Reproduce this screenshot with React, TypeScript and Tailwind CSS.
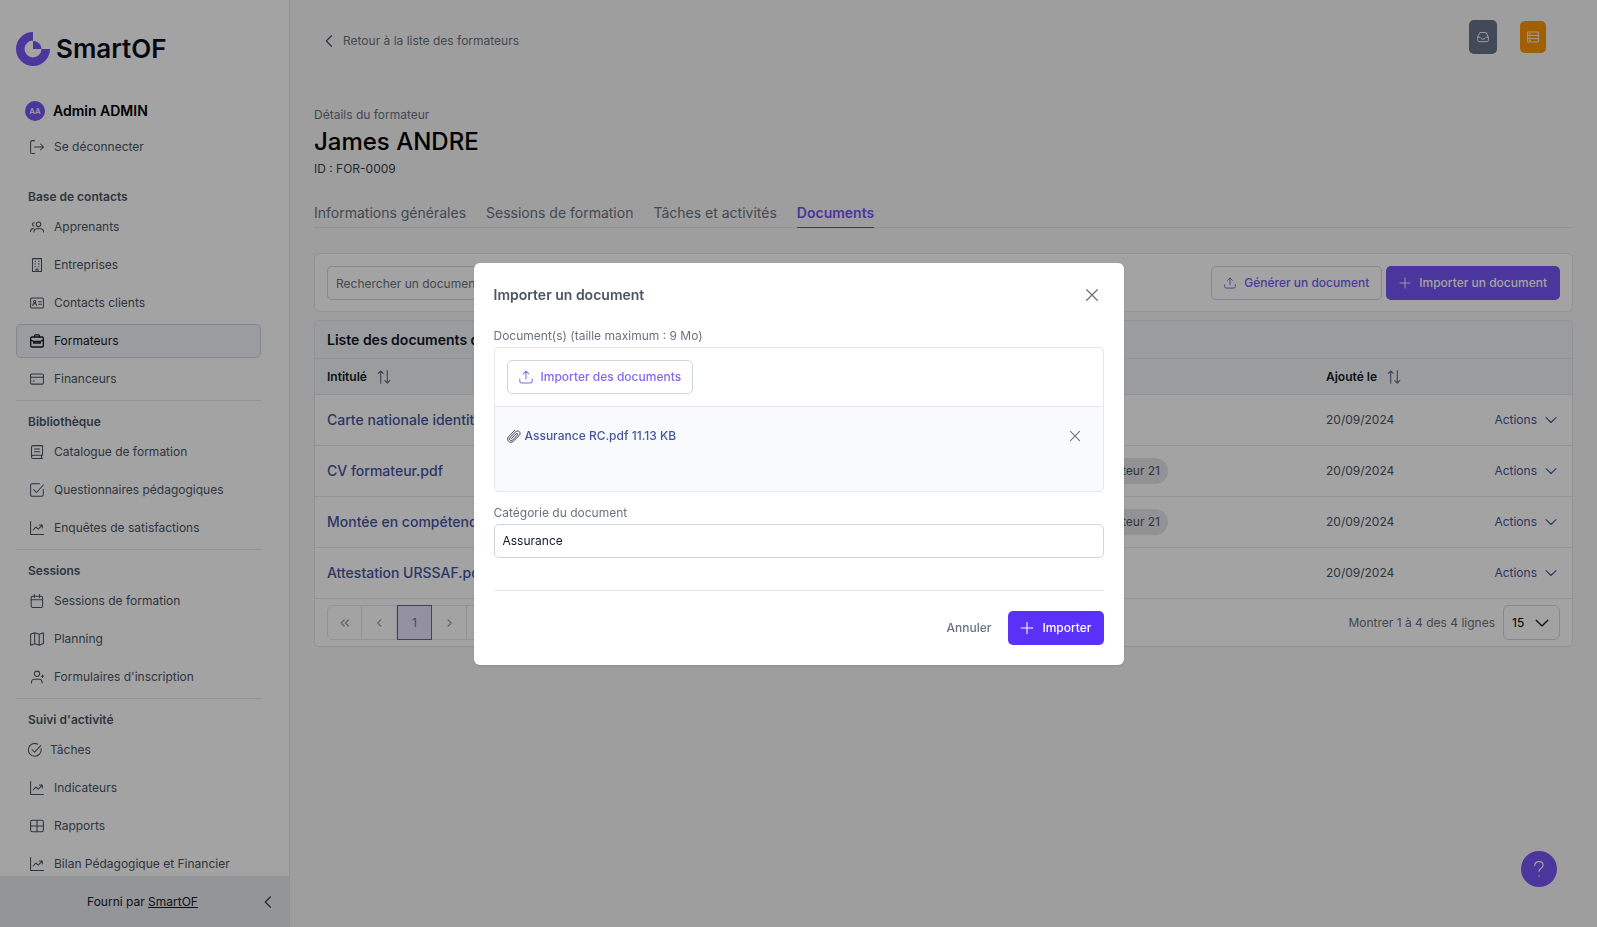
import type { ReactNode } from "react";

type IconProps = { className?: string };

function Svg({ className = "size-3.5", children }: { className?: string; children: ReactNode }) {
  return (
    <svg
      viewBox="0 0 14 14"
      className={`shrink-0 ${className}`}
      fill="none"
      stroke="currentColor"
      strokeWidth="1.050"
      strokeLinecap="round"
      strokeLinejoin="round"
      aria-hidden="true"
    >
      {children}
    </svg>
  );
}

const SignOut = (p: IconProps) => (
  <Svg {...p}>
    <path d="M4.500.6H2A1.400 1.400 0 0 0 .6 2v10A1.400 1.400 0 0 0 2 13.400h2.500M4.500 7h9M10.500 4l3 3-3 3" />
  </Svg>
);
const Users = (p: IconProps) => (
  <Svg {...p}>
    <circle cx="8.500" cy="4.300" r="2.300" />
    <path d="M4 12v-.6C4 9.700 5.200 8.800 6.700 8.800h3.600c1.500 0 3.200.9 3.200 2.600v.6M4.300 2.700C2.200 2.500 1.700 5.500 3.900 6.100M.5 11.500C.5 9.700 1.500 8.600 3.400 8.500" />
  </Svg>
);
const Building = (p: IconProps) => (
  <Svg {...p}>
    <path d="M2.500.6h9v12.800h-9zM6 13.400v-2.400h2v2.400" />
    <path d="M5.200 3v.6M8.800 3v.6M5.200 5.600v.6M8.800 5.600v.6M5.200 8.200v.6M8.800 8.200v.6" />
  </Svg>
);
const IdCard = (p: IconProps) => (
  <Svg {...p}>
    <rect x=".6" y="2" width="12.800" height="10" rx="1" />
    <circle cx="4.700" cy="5.500" r="1.100" />
    <path d="M2.700 9.500c.2-2.500 3.800-2.500 4 0M8.800 5.700h2.500M8.800 8.200h2.500" />
  </Svg>
);
const Briefcase = (p: IconProps) => (
  <Svg {...p}>
    <g strokeWidth="1.300">
      <rect x=".7" y="3" width="12.600" height="10" rx="1.200" />
      <path d="M4.500 3V1.800C4.500 1.200 4.900.9 5.400.9h3.200c.5 0 .9.300.9.900V3M.7 6.200l3 1.300h6.600l3-1.300M3.700 7.500v1.700h6.600V7.500" />
    </g>
  </Svg>
);
const CreditCard = (p: IconProps) => (
  <Svg {...p}>
    <rect x=".6" y="1.900" width="12.800" height="10.200" rx="1.200" />
    <path d="M.6 5.200h12.800M3.200 9h1.200" />
  </Svg>
);
const Book = (p: IconProps) => (
  <Svg {...p}>
    <path d="M12.500 10.300V.6H3A1.500 1.500 0 0 0 1.500 2v10A1.500 1.500 0 0 0 3 13.400h9.500M12.500 10.300H3A1.500 1.500 0 0 0 1.500 11.900M11.500 10.300v3.100M4.500 4h5M4.500 6.800h5" />
  </Svg>
);
const CheckSquare = (p: IconProps) => (
  <Svg {...p}>
    <path d="M9.500.7H2A1.400 1.400 0 0 0 .6 2.200v9.600A1.400 1.400 0 0 0 2 13.300h9.800a1.500 1.500 0 0 0 1.500-1.500V6.500M3.700 6.700l2.800 2.800 6.800-7.500" />
  </Svg>
);
const ChartLine = (p: IconProps) => (
  <Svg {...p}>
    <path d="M.6.5v12.900h12.900M3.300 9l2.500-3 2.400 2.200L12.200 4.200M9.300 4h3v3" />
  </Svg>
);
const Calendar = (p: IconProps) => (
  <Svg {...p}>
    <rect x="1.200" y="2.200" width="11.400" height="11.200" rx="1.500" />
    <path d="M1.200 5.700h11.400M4.300.6v3M9.600.6v3" />
  </Svg>
);
const MapIcon = (p: IconProps) => (
  <Svg {...p}>
    <path d="M.6 2.200L4.700.7l4.500 1.500L13.400.8v10.800l-4.200 1.700-4.500-1.600-4.100 1.500zM4.700.7v11M9.200 2.200v11" />
  </Svg>
);
const UserPlus = (p: IconProps) => (
  <Svg {...p}>
    <circle cx="7" cy="3.800" r="2.700" />
    <path d="M1.500 13v-.8c0-1.900 1.500-3 3.200-3h4.400c1.700 0 3 1.100 3 3v.8M11.300 6.300h2.500M12.500 5v2.500" />
  </Svg>
);
const CheckCircle = (p: IconProps) => (
  <Svg {...p}>
    <path d="M13 5.500A6.400 6.400 0 1 1 9.700 1.200M3.900 6.500l2.600 2.600 6.300-6.500" />
  </Svg>
);
const TableIcon = (p: IconProps) => (
  <Svg {...p}>
    <rect x=".6" y="1.200" width="12.800" height="11.600" rx="1.800" />
    <path d="M.6 7h12.800M7 1.200v11.600" />
  </Svg>
);
const Upload = (p: IconProps) => (
  <Svg {...p}>
    <path d="M7 9V1.200M4.100 4L7 1.100 9.900 4M.8 9v2.300c0 1 .6 1.600 1.600 1.600h9.200c1 0 1.600-.6 1.600-1.600V9" />
  </Svg>
);
const Plus = (p: IconProps) => (
  <Svg {...p}>
    <path d="M7 1.200v11.600M1.200 7h11.600" />
  </Svg>
);
const Close = (p: IconProps) => (
  <Svg {...p}>
    <path d="M1.700 1.700l10.600 10.600M12.300 1.700L1.700 12.300" strokeWidth="1.300" />
  </Svg>
);
const ChevronLeft = (p: IconProps) => (
  <Svg {...p}>
    <path d="M9.500 1.800L4.300 7l5.200 5.200" strokeWidth="1.250" />
  </Svg>
);
const ChevronDown = (p: IconProps) => (
  <Svg {...p}>
    <path d="M1.200 4.300L7 9.900l5.800-5.600" strokeWidth="1.350" />
  </Svg>
);
const SortAlt = (p: IconProps) => (
  <Svg {...p}>
    <path d="M3.700 13.300V.8M1.200 3.300L3.700.8l2.500 2.500M10.300.7v12.500M7.800 10.700l2.500 2.500 2.500-2.500" strokeWidth="1.200" />
  </Svg>
);
const Inbox = (p: IconProps) => (
  <Svg {...p}>
    <path d="M.7 7.300L3.300 1.800h7.400l2.600 5.500v3.600c0 .9-.6 1.500-1.500 1.500H2.200c-.9 0-1.500-.6-1.500-1.500zM.7 7.300h2.500c.8 0 1.400 2.200 3.800 2.200s3-2.200 3.800-2.200h2.500" />
  </Svg>
);
const Server = (p: IconProps) => (
  <Svg {...p}>
    <path d="M.7 1.200h12.600v11.600H.7zM.7 5.100h12.600M.7 8.900h12.600M2.600 3.200h1.200M2.600 7h1.200M2.600 10.900h1.200" />
  </Svg>
);
const Paperclip = (p: IconProps) => (
  <Svg {...p}>
    <path
      strokeWidth="1"
      d="M4.400 9.500l4.700-4.700c1-1 2.300.3 1.300 1.300L5.800 10.900c-1.900 1.900-4.500-.6-2.600-2.600L8.500 3c2.900-2.700 6.300.8 3.600 3.600L6.600 12c-3.600 3.400-8.100-1-4.800-4.600L7.800 1.300"
    />
  </Svg>
);

type Item = { label: string; Icon: (p: IconProps) => ReactNode; active?: boolean; tight?: boolean };

const sections: { title: string; items: Item[] }[] = [
  {
    title: "Base de contacts",
    items: [
      { label: "Apprenants", Icon: Users },
      { label: "Entreprises", Icon: Building },
      { label: "Contacts clients", Icon: IdCard },
      { label: "Formateurs", Icon: Briefcase, active: true },
      { label: "Financeurs", Icon: CreditCard },
    ],
  },
  {
    title: "Bibliothèque",
    items: [
      { label: "Catalogue de formation", Icon: Book },
      { label: "Questionnaires pédagogiques", Icon: CheckSquare },
      { label: "Enquêtes de satisfactions", Icon: ChartLine },
    ],
  },
  {
    title: "Sessions",
    items: [
      { label: "Sessions de formation", Icon: Calendar },
      { label: "Planning", Icon: MapIcon },
      { label: "Formulaires d'inscription", Icon: UserPlus },
    ],
  },
  {
    title: "Suivi d'activité",
    items: [
      { label: "Tâches", Icon: CheckCircle, tight: true },
      { label: "Indicateurs", Icon: ChartLine },
      { label: "Rapports", Icon: TableIcon },
      { label: "Bilan Pédagogique et Financier", Icon: ChartLine },
    ],
  },
];

function Sidebar() {
  return (
    <aside className="sticky top-0 flex h-screen w-[290px] shrink-0 flex-col border-r border-gray-200 bg-white">
      <div className="flex min-h-0 flex-1 flex-col overflow-hidden pr-7 pl-4">
        <a href="#" className="mt-8 flex h-[34px] shrink-0 items-center gap-1.5 text-[#0a0f1f]">
          <svg viewBox="0 0 34 34" className="size-[34px]" fill="#7555f5" aria-hidden="true">
            <path d="M17 0A17 17 0 1 0 34 17H25.500A8.500 8.500 0 1 1 17 8.500z" />
            <path d="M17 9v8h8.500A8.500 8.500 0 0 0 17 9z" />
          </svg>
          <span className="text-[26px] leading-8 font-semibold">SmartOF</span>
        </a>
        <div className="mt-[34px] ml-[9px] flex h-[22px] shrink-0 items-center gap-2">
          <span className="flex size-5 items-center justify-center rounded-full bg-[#7555f5] text-[8px] font-medium text-white">
            AA
          </span>
          <span className="text-[14px] font-semibold text-black">Admin ADMIN</span>
        </div>
        <button type="button" className="mt-4 flex h-[18px] shrink-0 items-center gap-2.5 px-3.5 text-gray-600">
          <SignOut />
          Se déconnecter
        </button>
        <nav className="mt-5 shrink-0">
          {sections.map((s) => (
            <section key={s.title} className="border-b border-gray-200 pb-0.5">
              <h2 className="px-3 pt-3 pb-0.5 font-semibold text-gray-600">{s.title}</h2>
              <ul className="flex flex-col gap-1 py-0.5">
                {s.items.map(({ label, Icon, active, tight }) => (
                  <li key={label}>
                    <a
                      href="#"
                      className={`flex h-[34px] items-center rounded-[5px] border ${
                        active ? "border-slate-300 bg-slate-100 text-gray-900" : "border-transparent text-gray-600"
                      } ${tight ? "gap-2 px-[11px]" : "gap-2.5 px-[13px]"}`}
                    >
                      <Icon />
                      {label}
                    </a>
                  </li>
                ))}
              </ul>
            </section>
          ))}
        </nav>
      </div>
      <footer className="flex h-[51px] shrink-0 items-center bg-[#e7e9ef] pr-3.5 pl-6 text-gray-900">
        <p className="flex-1 text-center">
          Fourni par{" "}
          <a href="#" className="underline">
            SmartOF
          </a>
        </p>
        <button type="button" aria-label="Réduire le menu" className="text-gray-700">
          <ChevronLeft />
        </button>
      </footer>
    </aside>
  );
}

const tabs = ["Informations générales", "Sessions de formation", "Tâches et activités", "Documents"];

const rows = [
  { name: "Carte nationale identité.pdf", tag: false },
  { name: "CV formateur.pdf", tag: true },
  { name: "Montée en compétences.pdf", tag: true },
  { name: "Attestation URSSAF.pdf", tag: false },
];

function Documents() {
  return (
    <div className="mt-2 overflow-hidden rounded-[5px] border border-gray-200 bg-white">
      <h2 className="flex h-[37px] items-center bg-[#f1f4f8] px-3 text-[14px] font-semibold text-gray-900">
        Liste des documents du formateur
      </h2>
      <table className="w-full table-fixed text-left">
        <colgroup>
          <col className="w-[45%]" />
          <col />
          <col className="w-[160px]" />
          <col className="w-[98px]" />
        </colgroup>
        <thead>
          <tr className="h-9 border-y border-gray-200 bg-[#f1f4f8] text-[12px] text-gray-900">
            <th className="px-3 font-semibold">
              <span className="flex items-center gap-2.5">
                Intitulé <SortAlt className="size-3.5 text-gray-500" />
              </span>
            </th>
            <th />
            <th className="px-3 font-semibold">
              <span className="flex items-center gap-2.5">
                Ajouté le <SortAlt className="size-3.5 text-gray-500" />
              </span>
            </th>
            <th />
          </tr>
        </thead>
        <tbody>
          {rows.map((r) => (
            <tr key={r.name} className="h-[51px] border-b border-gray-200">
              <td className="px-3 text-[14px] font-medium">
                <a href="#" className="text-[#4655a0]">
                  {r.name}
                </a>
              </td>
              <td className="pr-[146px] text-right">
                {r.tag && (
                  <span className="inline-flex h-[26px] items-center rounded-full bg-[#e4e4ea] px-2 text-gray-600">
                    Formateur 21
                  </span>
                )}
              </td>
              <td className="px-3 text-gray-600">20/09/2024</td>
              <td className="pr-[15px]">
                <button type="button" className="ml-auto flex items-center gap-2 text-[#4655a0]">
                  Actions
                  <ChevronDown className="size-3" />
                </button>
              </td>
            </tr>
          ))}
        </tbody>
      </table>
      <div className="flex h-[47px] items-center justify-between px-3">
        <div className="flex text-gray-400">
          <button type="button" aria-label="Première page" className="grid h-[35px] w-[35px] place-items-center rounded-l-md border border-gray-200">
            <Svg className="size-3">
              <path d="M6 3.500L2.500 7 6 10.500M11 3.500L7.500 7l3.500 3.500" strokeWidth="1.500" />
            </Svg>
          </button>
          <button type="button" aria-label="Page précédente" className="grid h-[35px] w-[35px] place-items-center border border-l-0 border-gray-200">
            <Svg className="size-3">
              <path d="M9 3.500L5.500 7 9 10.500" strokeWidth="1.500" />
            </Svg>
          </button>
          <button type="button" className="h-[35px] w-[35px] border border-[#6f55f0] bg-[#e6e2fb] text-[#7a62f2]">
            1
          </button>
          <button type="button" aria-label="Page suivante" className="grid h-[35px] w-[35px] place-items-center border border-l-0 border-gray-200">
            <Svg className="size-3">
              <path d="M6 3.500L9.500 7 6 10.500" strokeWidth="1.500" />
            </Svg>
          </button>
          <button type="button" aria-label="Dernière page" className="grid h-[35px] w-[35px] place-items-center rounded-r-md border border-l-0 border-gray-200">
            <Svg className="size-3">
              <path d="M3 3.500L6.500 7 3 10.500M8 3.500L11.500 7 8 10.500" strokeWidth="1.500" />
            </Svg>
          </button>
        </div>
        <div className="flex items-center gap-2 text-gray-500">
          <span>Montrer 1 à 4 des 4 lignes</span>
          <div className="relative">
            <select
              aria-label="Lignes par page"
              className="h-[35px] w-[57px] appearance-none rounded-md border border-gray-300 bg-white pl-2 text-black"
            >
              <option>15</option>
            </select>
            <ChevronDown className="pointer-events-none absolute top-[11px] right-[11px] size-3.5 text-gray-900" />
          </div>
        </div>
      </div>
    </div>
  );
}

function ImportDialog() {
  return (
    <div className="fixed inset-0 flex items-center justify-center bg-black/36">
      <div
        role="dialog"
        aria-modal="true"
        aria-labelledby="dialog-title"
        className="w-[650px] max-w-full rounded-md bg-white p-5 text-gray-600 shadow-sm"
      >
        <div className="flex h-6 items-center justify-between pr-[5px]">
          <h2 id="dialog-title" className="text-[14px] font-semibold text-gray-600">
            Importer un document
          </h2>
          <button type="button" aria-label="Fermer" className="text-gray-500">
            <Close />
          </button>
        </div>
        <p className="mt-5 pb-0.5 text-gray-500">Document(s) (taille maximum : 9 Mo)</p>
        <div className="overflow-hidden rounded border border-gray-200">
          <div className="border-b border-gray-200 p-3">
            <button
              type="button"
              className="flex h-[34px] items-center gap-2 rounded-[5px] border border-gray-300 px-[11px] font-medium text-[#8468ea]"
            >
              <Upload />
              Importer des documents
            </button>
          </div>
          <div className="flex h-[84px] items-start justify-between bg-[#f9fafc] pt-5 pr-[22px] pl-3">
            <a href="#" className="flex items-center gap-1 font-medium text-[#4655a0]">
              <Paperclip className="size-3.5 text-gray-700" />
              Assurance RC.pdf 11.13 KB
            </a>
            <button type="button" aria-label="Retirer le fichier" className="mt-[3px] text-gray-500">
              <Close className="size-3" />
            </button>
          </div>
        </div>
        <label htmlFor="category" className="mt-3 block pb-0.5 text-gray-500">
          Catégorie du document
        </label>
        <input
          id="category"
          defaultValue="Assurance"
          className="block h-[34px] w-full rounded-[5px] border border-gray-300 px-2 text-gray-900"
        />
        <div className="mt-8 flex justify-end gap-[17px] border-t border-gray-200 pt-5">
          <button type="button" className="font-medium text-gray-500">
            Annuler
          </button>
          <button
            type="button"
            className="flex h-[34px] items-center gap-2 rounded-[5px] bg-[#5a31f8] px-3 font-medium text-white"
          >
            <Plus />
            Importer
          </button>
        </div>
      </div>
    </div>
  );
}

export default function App() {
  return (
    <div className="flex min-h-screen bg-[#f7f7f7] font-[Inter,sans-serif] text-[12px] leading-[18px]">
      <Sidebar />
      <main className="min-w-0 flex-1 px-6 pt-5 pb-6">
        <header className="flex items-start justify-between pr-[27px] pl-2">
          <a href="#" className="mt-1 flex h-[34px] items-center gap-[7px] text-gray-500">
            <ChevronLeft className="size-3.5 text-gray-600" />
            Retour à la liste des formateurs
          </a>
          <div className="flex items-center gap-[23px]">
            <button type="button" aria-label="Boîte de réception" className="grid h-[34px] w-7 place-items-center rounded-[5px] bg-[#687488] text-white">
              <Inbox className="size-3" />
            </button>
            <button type="button" aria-label="Serveur" className="grid h-8 w-[26px] place-items-center rounded-[5px] bg-[#fb9500] text-white">
              <Server className="size-3" />
            </button>
          </div>
        </header>
        <p className="mt-12 text-gray-500">Détails du formateur</p>
        <h1 className="text-[24px] leading-9 font-medium text-black">James ANDRE</h1>
        <p className="text-gray-700">ID : FOR-0009</p>
        <nav className="mt-6 flex gap-5 border-b border-gray-200 text-[14px] leading-[22px] text-gray-500">
          {tabs.map((t) =>
            t === "Documents" ? (
              <a key={t} href="#" aria-current="page" className="-mb-px border-b border-[#6a45f0] pb-[3px] font-semibold text-[#7555f5]">
                {t}
              </a>
            ) : (
              <a key={t} href="#" className="pb-[3px]">
                {t}
              </a>
            )
          )}
        </nav>
        <div className="mt-[25px] flex items-center gap-1 rounded-md border border-gray-200 bg-white px-3 pt-3 pb-[11px]">
          <input
            type="search"
            aria-label="Rechercher un document"
            placeholder="Rechercher un document"
            className="mr-auto h-[34px] w-[240px] rounded-[5px] border border-gray-300 px-2 placeholder:text-gray-500"
          />
          <button type="button" className="flex h-[34px] items-center gap-2 rounded-[5px] border border-gray-300 px-3 font-medium text-[#7a5cf0]">
            <Upload className="size-3" />
            Générer un document
          </button>
          <button type="button" className="flex h-[34px] items-center gap-2 rounded-[5px] bg-[#7555f5] px-[13px] font-medium text-white">
            <Plus className="size-3" />
            Importer un document
          </button>
        </div>
        <Documents />
      </main>
      <button type="button" aria-label="Aide" className="fixed right-10 bottom-10 grid size-9 place-items-center rounded-full bg-[#7555f5] text-white">
        <Svg className="size-4">
          <path d="M3.300 3.900C3.400 2 5 .6 7 .6s3.600 1.300 3.600 3.200c0 2.500-3.600 2.500-3.600 5.200M7 12.900v.3" />
        </Svg>
      </button>
      <ImportDialog />
    </div>
  );
}
